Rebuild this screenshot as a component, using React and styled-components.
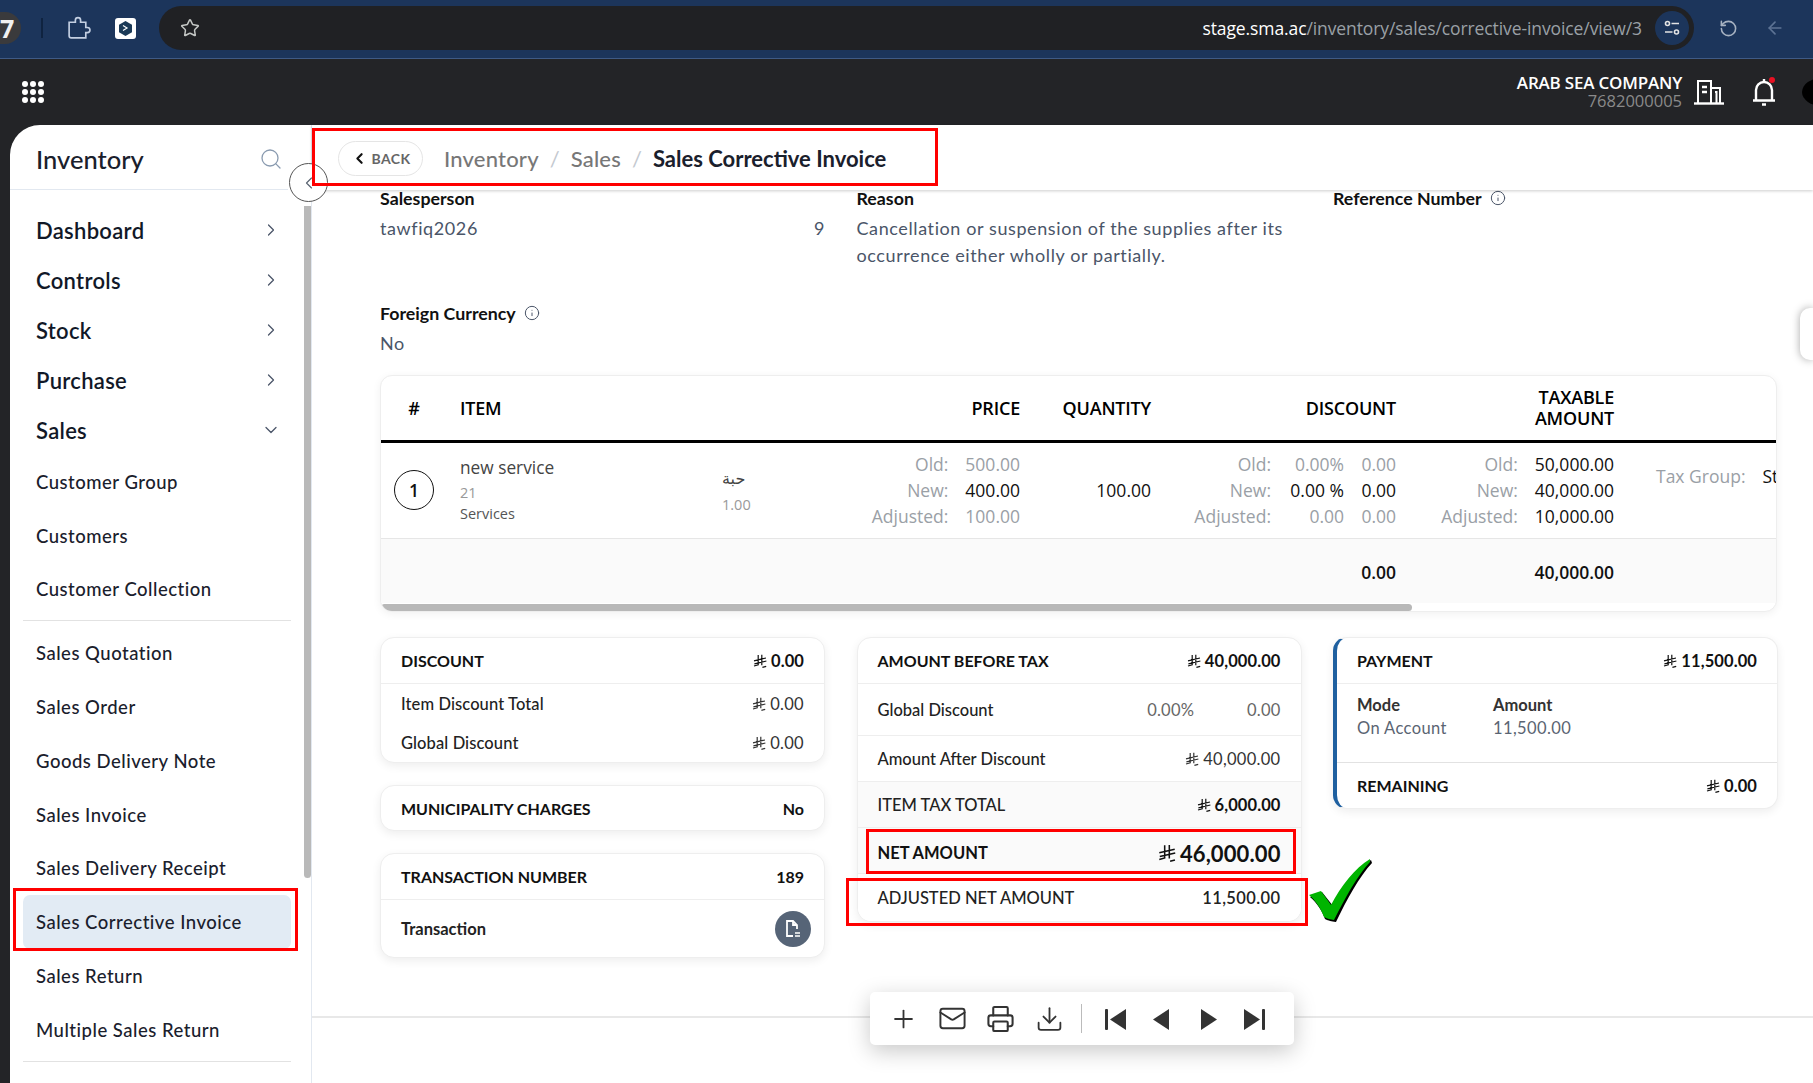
import React from "react";
import styled, { createGlobalStyle } from "styled-components";
import { Star, RotateCcw, ArrowLeft, Search, ChevronRight, ChevronDown, ChevronLeft, Info, Plus, Mail, Printer, Download } from "lucide-react";

const mainFont = `"Lato", "Liberation Sans", sans-serif`;
const tableFont = `"Open Sans", "Noto Sans", sans-serif`;

const GlobalStyle = createGlobalStyle`
  html, body { margin: 0; padding: 0; height: 100%; overflow: hidden; background: #fff; }
  body { font-family: "Lato", "Liberation Sans", sans-serif; color: #1a202c; }
  * { box-sizing: border-box; }
`;

const Riyal = ({ size = 14 }) => (
  <svg width={size} height={size} viewBox="0 0 14 14" fill="none" stroke="currentColor" strokeWidth="1.2">
    <path d="M5.200 1v9.800L1 12M8.800 0.800v10.400M1 6.800l12-2.800M1.400 9.800l12-2.800M9.400 13.400l3.800-1" />
  </svg>
);

const App = () => {
  const mainMenu = ["Dashboard", "Controls", "Stock", "Purchase"];
  const group1 = ["Customer Group", "Customers", "Customer Collection"];
  const group2 = ["Sales Quotation", "Sales Order", "Goods Delivery Note", "Sales Invoice", "Sales Delivery Receipt"];
  const group3 = ["Sales Return", "Multiple Sales Return"];
  return (
    <Page>
      <GlobalStyle />
      <BrowserBar>
        <TabCount>7</TabCount>
        <BarDivider />
        <PuzzleIcon viewBox="0 0 24 24"><path d="M3 6h6V4a2.500 2.500 0 0 1 5 0v2h5v5h1.500a2.500 2.500 0 0 1 0 5H19v5H5a2 2 0 0 1-2-2z" /></PuzzleIcon>
        <ExtLogo>
          <svg width="17" height="17" viewBox="0 0 17 17"><path d="M8.500 1 15 4.700v7.600L8.500 16 2 12.300V4.700z" fill="#1b3a57" /><path d="M6 5.500 10 8 6 10.500" stroke="#fff" strokeWidth="1.200" fill="none" /></svg>
        </ExtLogo>
        <AddressPill>
          <Star size={20} color="#c4c7c5" strokeWidth={1.8} />
          <Url><b>stage.sma.ac</b>/inventory/sales/corrective-invoice/view/3</Url>
          <TuneButton>
            <svg width="18" height="18" viewBox="0 0 18 18" fill="none" stroke="#e3e3e3" strokeWidth="1.6"><circle cx="4.500" cy="4.500" r="2" /><path d="M8.500 4.500H16M2 13h7.500" /><circle cx="13.500" cy="13" r="2" /></svg>
          </TuneButton>
        </AddressPill>
        <NavIcons>
          <RotateCcw size={19} color="#a8b3c2" />
          <ArrowLeft size={20} color="#5d7394" />
        </NavIcons>
      </BrowserBar>

      <AppHeader>
        <DotGrid>{Array.from({ length: 9 }).map((_, i) => <i key={i} />)}</DotGrid>
        <Company>
          <strong>ARAB SEA COMPANY</strong>
          <span>7682000005</span>
        </Company>
        <svg width="30" height="26" viewBox="0 0 30 26" fill="none" stroke="#fff" strokeWidth="2"><path d="M4 24V2h13v22M17 9h9v15" /><path d="M0 24.500h30" strokeWidth="2.400" /><path d="M8 8h5M8 13h5" strokeWidth="2.600" /><path d="M21 13h1.500v11" /></svg>
        <BellWrap>
          <svg width="24" height="30" viewBox="0 0 24 30" fill="none" stroke="#fff" strokeWidth="2.400"><path d="M4 23V13a8 8 0 0 1 16 0v10M1 23.500h22" /><path d="M10 27.500h4M12 2v3" /></svg>
          <RedDot />
        </BellWrap>
        <Avatar />
      </AppHeader>

      <Body>
        <Sidebar>
          <SideHead>
            <SideTitle>Inventory</SideTitle>
            <Search size={24} color="#8a9bb0" strokeWidth={1.3} />
          </SideHead>
          <SideNav>
            {mainMenu.map((m) => (
              <MainItem key={m}>{m}<ChevronRight size={20} color="#4a5568" strokeWidth={1.5} /></MainItem>
            ))}
            <MainItem>Sales<ChevronDown size={20} color="#4a5568" strokeWidth={1.5} /></MainItem>
            {group1.map((m) => <SubItem key={m}>{m}</SubItem>)}
            <SideRule />
            {group2.map((m) => <SubItem key={m}>{m}</SubItem>)}
            <SubItem $active>Sales Corrective Invoice</SubItem>
            {group3.map((m) => <SubItem key={m}>{m}</SubItem>)}
            <SideRule />
          </SideNav>
          <SideScroll />
        </Sidebar>
        <CollapseBtn><ChevronLeft size={20} color="#5a6472" strokeWidth={1.4} /></CollapseBtn>

        <Main>
          <Crumbs>
            <BackBtn><ChevronLeft size={17} color="#111" strokeWidth={3} />BACK</BackBtn>
            <Crumb>Inventory</Crumb><Slash>/</Slash>
            <Crumb>Sales</Crumb><Slash>/</Slash>
            <Crumb $current>Sales Corrective Invoice</Crumb>
          </Crumbs>

          <Content>
            <InfoGrid>
              <InfoCell>
                <Label>Salesperson</Label>
                <ValueRow><Value>tawfiq2026</Value><Value>9</Value></ValueRow>
              </InfoCell>
              <InfoCell>
                <Label>Reason</Label>
                <Value>Cancellation or suspension of the supplies after its occurrence either wholly or partially.</Value>
              </InfoCell>
              <InfoCell>
                <Label>Reference Number <Info size={16} color="#4a5568" strokeWidth={1.5} /></Label>
              </InfoCell>
            </InfoGrid>
            <CurrencyBlock>
              <Label>Foreign Currency <Info size={16} color="#4a5568" strokeWidth={1.5} /></Label>
              <Value>No</Value>
            </CurrencyBlock>

            <TableCard>
              <TableRow $head>
                <NumCol>#</NumCol>
                <ItemCol>ITEM</ItemCol>
                <UnitCol />
                <PriceCol>PRICE</PriceCol>
                <QtyCol>QUANTITY</QtyCol>
                <DiscCol>DISCOUNT</DiscCol>
                <TaxableCol>TAXABLE<br />AMOUNT</TaxableCol>
              </TableRow>
              <TableRow>
                <NumCol><RowNum>1</RowNum></NumCol>
                <ItemCol>
                  <ItemName>new service</ItemName>
                  <ItemCode>21</ItemCode>
                  <ItemCat>Services</ItemCat>
                </ItemCol>
                <UnitCol>
                  <UnitName>حبة</UnitName>
                  <ItemCode>1.00</ItemCode>
                </UnitCol>
                <PriceCol>
                  <Stack>
                    <Muted>Old:</Muted><Muted>500.00</Muted>
                    <Muted>New:</Muted><span>400.00</span>
                    <Muted>Adjusted:</Muted><Muted>100.00</Muted>
                  </Stack>
                </PriceCol>
                <QtyCol>100.00</QtyCol>
                <DiscCol>
                  <Stack $three>
                    <Muted>Old:</Muted><Muted>0.00%</Muted><Muted>0.00</Muted>
                    <Muted>New:</Muted><span>0.00 %</span><span>0.00</span>
                    <Muted>Adjusted:</Muted><Muted>0.00</Muted><Muted>0.00</Muted>
                  </Stack>
                </DiscCol>
                <TaxableCol>
                  <Stack>
                    <Muted>Old:</Muted><span>50,000.00</span>
                    <Muted>New:</Muted><span>40,000.00</span>
                    <Muted>Adjusted:</Muted><span>10,000.00</span>
                  </Stack>
                </TaxableCol>
                <TaxGroup><Muted>Tax Group:</Muted><span>Standard</span></TaxGroup>
              </TableRow>
              <TableRow $foot>
                <NumCol /><ItemCol /><UnitCol /><PriceCol /><QtyCol />
                <DiscCol>0.00</DiscCol>
                <TaxableCol>40,000.00</TaxableCol>
              </TableRow>
              <HScroll><HThumb /></HScroll>
            </TableCard>

            <CardsGrid>
              <CardColumn>
                <Card>
                  <CardHead><span>DISCOUNT</span><Money><Riyal />0.00</Money></CardHead>
                  <PlainRow><span>Item Discount Total</span><Money $plain><Riyal />0.00</Money></PlainRow>
                  <PlainRow><span>Global Discount</span><Money $plain><Riyal />0.00</Money></PlainRow>
                </Card>
                <Card>
                  <CardHead $last><span>MUNICIPALITY CHARGES</span><span>No</span></CardHead>
                </Card>
                <Card>
                  <CardHead><span>TRANSACTION NUMBER</span><span>189</span></CardHead>
                  <TransRow>
                    <span>Transaction</span>
                    <FileBtn>
                      <svg width="18" height="20" viewBox="0 0 18 20" fill="none" stroke="#fff" strokeWidth="1.800"><path d="M9 17H3V2h6l4 4v4M9 2v4h4" /><path d="M11 14h5M11 17h5" strokeWidth="1.400" /></svg>
                    </FileBtn>
                  </TransRow>
                </Card>
              </CardColumn>

              <Card>
                <CardHead><span>AMOUNT BEFORE TAX</span><Money><Riyal />40,000.00</Money></CardHead>
                <SummaryRow $h={52}><span>Global Discount</span><DiscValues><span>0.00%</span><span>0.00</span></DiscValues></SummaryRow>
                <SummaryRow><span>Amount After Discount</span><Money $plain><Riyal />40,000.00</Money></SummaryRow>
                <SummaryRow $shade><span>ITEM TAX TOTAL</span><Money><Riyal />6,000.00</Money></SummaryRow>
                <SummaryRow $shade $net><span>NET AMOUNT</span><Money $big><Riyal size={18} />46,000.00</Money></SummaryRow>
                <SummaryRow $adjusted><span>ADJUSTED NET AMOUNT</span><strong>11,500.00</strong></SummaryRow>
              </Card>

              <Card $accent>
                <CardHead><span>PAYMENT</span><Money><Riyal />11,500.00</Money></CardHead>
                <PayBody>
                  <PayCol><b>Mode</b><span>On Account</span></PayCol>
                  <PayCol><b>Amount</b><span>11,500.00</span></PayCol>
                </PayBody>
                <CardHead $last $top><span>REMAINING</span><Money><Riyal />0.00</Money></CardHead>
              </Card>
            </CardsGrid>
            <FootRule />
          </Content>

          <SideTab />
        </Main>
      </Body>

      <Toolbar>
        <ToolGroup>
          <ToolBtn><Plus size={38} strokeWidth={1.500} /></ToolBtn>
          <ToolBtn><Mail size={33} strokeWidth={1.600} /></ToolBtn>
          <ToolBtn><Printer size={32} strokeWidth={1.700} /></ToolBtn>
          <ToolBtn><Download size={36} strokeWidth={1.500} /></ToolBtn>
        </ToolGroup>
        <ToolDivider />
        <NavGroup>
          <ToolBtn><svg width="24" height="24" viewBox="0 0 24 24" fill="#333"><path d="M22 2v21L6 12.500z" /><rect x="1" y="2" width="3" height="21" rx="1" /></svg></ToolBtn>
          <ToolBtn><svg width="20" height="24" viewBox="0 0 20 24" fill="#333"><path d="M17 2v21L1 12.500z" /></svg></ToolBtn>
          <ToolBtn><svg width="20" height="24" viewBox="0 0 20 24" fill="#333"><path d="M3 2v21l16-10.500z" /></svg></ToolBtn>
          <ToolBtn><svg width="24" height="24" viewBox="0 0 24 24" fill="#333"><path d="M2 2v21l16-10.500z" /><rect x="20" y="2" width="3" height="21" rx="1" /></svg></ToolBtn>
        </NavGroup>
      </Toolbar>

      <RedBox $x={312} $y={128} $w={626} $h={58} />
      <RedBox $x={13} $y={888} $w={285} $h={63} />
      <RedBox $x={866} $y={829} $w={430} $h={45} />
      <RedBox $x={846} $y={878} $w={462} $h={48} />
      <Check viewBox="0 0 64 64">
        <path d="M1 38 13 33 24 47C34 28 48 10 62 1L63 4C50 18 38 40 27 63 22 62 20 62 16 60 13 52 8 44 1 38Z" fill="#000" />
        <path d="M0 36 12 32 22 46C32 27 46 9 61 0L61 3C48 17 36 39 25 61 21 60 19 60 15 58 12 50 7 42 0 36Z" fill="#00b400" />
      </Check>
    </Page>
  );
};

const Page = styled.div`
  position: relative;
  width: 1813px;
  height: 1083px;
  overflow: hidden;
  display: flex;
  flex-direction: column;
  background: #232427;
`;

const BrowserBar = styled.div`
  height: 59px;
  flex: none;
  background: #1c355b;
  border-bottom: 1px solid #3f5a85;
  display: flex;
  align-items: center;
  padding-bottom: 2px;
`;

const TabCount = styled.div`
  width: 21px;
  height: 32px;
  margin-right: 20px;
  border-radius: 0 16px 16px 0;
  background: #3a3a3c;
  color: #f1f1f1;
  font: 700 25px/32px ${tableFont};
`;

const BarDivider = styled.div`
  width: 2px;
  height: 20px;
  background: #0f2340;
  margin-right: 23px;
`;

const PuzzleIcon = styled.svg`
  width: 25px;
  height: 25px;
  fill: none;
  stroke: #c3cfe2;
  stroke-width: 1.6;
  margin-right: 24px;
`;

const ExtLogo = styled.div`
  width: 21px;
  height: 21px;
  background: #fff;
  border-radius: 3px;
  display: flex;
  align-items: center;
  justify-content: center;
  margin-right: 23px;
`;

const AddressPill = styled.div`
  width: 1535px;
  height: 44px;
  flex: none;
  background: #202124;
  border-radius: 22px;
  display: flex;
  align-items: center;
  padding: 0 5px 0 21px;
`;

const Url = styled.div`
  margin-left: auto;
  margin-right: 13px;
  color: #9aa0a6;
  font: 400 17.5px ${tableFont};
  letter-spacing: -0.1px;
  b { font-weight: 400; color: #fff; }
`;

const TuneButton = styled.div`
  width: 34px;
  height: 34px;
  border-radius: 50%;
  background: #1c355b;
  display: flex;
  align-items: center;
  justify-content: center;
`;

const NavIcons = styled.div`
  display: flex;
  gap: 27px;
  margin-left: 25px;
  align-items: center;
`;

const AppHeader = styled.div`
  height: 66px;
  flex: none;
  display: flex;
  align-items: center;
  padding-left: 22px;
`;

const DotGrid = styled.div`
  display: grid;
  grid-template-columns: repeat(3, 6px);
  gap: 2px;
  margin-right: auto;
  i { width: 6px; height: 6px; border-radius: 50%; background: #fff; }
`;

const Company = styled.div`
  display: flex;
  flex-direction: column;
  align-items: flex-end;
  margin-right: 12px;
  color: #fff;
  font-family: ${tableFont};
  strong { font-size: 17px; font-weight: 600; line-height: 18px; letter-spacing: -0.2px; }
  span { font-size: 16.500px; line-height: 18px; color: #8a8a8a; }
`;

const BellWrap = styled.div`
  position: relative;
  display: flex;
  margin-left: 28px;
  margin-right: 26px;
`;

const RedDot = styled.span`
  position: absolute;
  right: 1px;
  top: 0;
  width: 6px;
  height: 6px;
  border-radius: 50%;
  background: #e81123;
`;

const Avatar = styled.div`
  width: 40px;
  height: 28px;
  margin-right: -29px;
  border-radius: 50%;
  background: #000;
`;

const Body = styled.div`
  position: relative;
  flex: 1;
  min-height: 0;
  display: flex;
  padding-left: 10px;
`;

const Sidebar = styled.aside`
  position: relative;
  width: 302px;
  flex: none;
  background: #fff;
  border-top-left-radius: 30px;
  border-right: 1px solid #e2e8f0;
  overflow: hidden;
`;

const SideHead = styled.div`
  height: 65px;
  width: 278px;
  display: flex;
  align-items: center;
  justify-content: space-between;
  padding: 3px 5px 0 26px;
  border-bottom: 1px solid #e2e8f0;
`;

const SideTitle = styled.div`
  font: 500 25.500px ${mainFont};
  color: #1a202c;
`;

const SideNav = styled.nav`
  padding: 15px 0 0 13px;
  width: 280px;
  display: flex;
  flex-direction: column;
`;

const MainItem = styled.div`
  height: 50px;
  display: flex;
  align-items: center;
  justify-content: space-between;
  padding: 0 9px 0 13px;
  font: 600 22px ${mainFont};
  letter-spacing: 0.3px;
  color: #111827;
`;

const SubItem = styled.div`
  height: 53.800px;
  width: 268px;
  display: flex;
  align-items: center;
  padding-left: 13px;
  font: 500 18.500px ${mainFont};
  letter-spacing: 0.5px;
  color: #1a202c;
  border-radius: 7px;
  background: ${(p) => (p.$active ? "#e2ebf4" : "transparent")};
`;

const SideRule = styled.hr`
  width: 268px;
  margin: 4px 0 5px;
  border: 0;
  border-top: 1px solid #e2e2e2;
`;

const SideScroll = styled.div`
  position: absolute;
  right: 0;
  top: 81px;
  width: 7px;
  height: 672px;
  background: #b9b9b9;
  border-radius: 0 0 4px 4px;
`;

const CollapseBtn = styled.div`
  position: absolute;
  left: 289px;
  top: 38px;
  width: 39px;
  height: 39px;
  border-radius: 50%;
  background: #fff;
  border: 1px solid #555;
  display: flex;
  align-items: center;
  justify-content: center;
  z-index: 3;
`;

const Main = styled.main`
  position: relative;
  flex: 1;
  min-width: 0;
  background: #fff;
  display: flex;
  flex-direction: column;
`;

const Crumbs = styled.div`
  height: 65px;
  flex: none;
  display: flex;
  align-items: center;
  padding: 1px 0 0 26px;
  box-shadow: 0 1px 3px rgba(0, 0, 0, 0.2);
  position: relative;
  z-index: 1;
  background: #fff;
`;

const BackBtn = styled.div`
  height: 35px;
  width: 85px;
  margin-right: 21px;
  border: 1px solid #e5e5e5;
  border-radius: 18px;
  display: flex;
  align-items: center;
  justify-content: center;
  gap: 4px;
  font: 700 14px ${mainFont};
  letter-spacing: 0.4px;
  color: #666;
`;

const Crumb = styled.div`
  font: ${(p) => (p.$current ? "700 22px" : "500 22px")} ${mainFont};
  letter-spacing: ${(p) => (p.$current ? "0" : "0.2px")};
  color: ${(p) => (p.$current ? "#1a202c" : "#777")};
`;

const Slash = styled.div`
  margin: 0 11px;
  font: 400 22px ${mainFont};
  color: #c4c9d0;
`;

const Content = styled.div`
  flex: 1;
  min-height: 0;
  padding: 0 36px 0 68px;
`;

const InfoGrid = styled.div`
  display: grid;
  grid-template-columns: 445px 445px 445px;
  column-gap: 31.500px;
  height: 102px;
`;

const InfoCell = styled.div`
  display: flex;
  flex-direction: column;
`;

const Label = styled.div`
  display: flex;
  align-items: center;
  gap: 8px;
  font: 700 17.800px/16px ${mainFont};
  color: #111;
  margin-bottom: 9px;
`;

const ValueRow = styled.div`
  display: flex;
  justify-content: space-between;
`;

const Value = styled.div`
  font: 400 18px/27px ${mainFont};
  letter-spacing: 0.6px;
  color: #4a5568;
`;

const CurrencyBlock = styled.div`
  height: 83px;
  padding-top: 13px;
  ${Label} { margin-bottom: 9px; }
`;

const TableCard = styled.div`
  position: relative;
  height: 237px;
  background: #fff;
  border: 1px solid #eee;
  border-radius: 12px;
  box-shadow: 0 2px 8px rgba(0, 0, 0, 0.06);
  overflow: hidden;
  font-family: ${tableFont};
`;

const NumCol = styled.div`
  width: 66px;
  flex: none;
  display: flex;
  justify-content: center;
`;

const ItemCol = styled.div`
  width: 275px;
  flex: none;
  padding-left: 13px;
`;

const UnitCol = styled.div`
  width: 113px;
  flex: none;
`;

const PriceCol = styled.div`
  width: 185px;
  flex: none;
  text-align: right;
`;

const QtyCol = styled.div`
  width: 131px;
  flex: none;
  text-align: right;
`;

const DiscCol = styled.div`
  width: 245px;
  flex: none;
  text-align: right;
`;

const TaxableCol = styled.div`
  width: 218px;
  flex: none;
  text-align: right;
`;

const TableRow = styled.div`
  display: flex;
  align-items: center;
  white-space: nowrap;
  color: #111;
  font-size: 17.500px;
  ${(p) =>
    p.$head
      ? `height: 67px; border-bottom: 3px solid #000; font-weight: 600; font-size: 18px; line-height: 21px; letter-spacing: -0.2px; color: #000;`
      : p.$foot
      ? `height: 64px; background: #fafafa; font-weight: 600; color: #111; padding-top: 1px;`
      : `height: 96px; border-bottom: 1px solid #e6e6e6; padding-bottom: 1px;`}
`;

const RowNum = styled.div`
  width: 40px;
  height: 40px;
  border: 1px solid #111;
  border-radius: 50%;
  display: flex;
  align-items: center;
  justify-content: center;
  font-weight: 600;
`;

const ItemName = styled.div`
  font-size: 17.300px;
  color: #444;
  line-height: 23px;
`;

const ItemCode = styled.div`
  font-size: 14.500px;
  color: #999;
  line-height: 21px;
  margin-top: 3px;
`;

const ItemCat = styled.div`
  font-size: 14.500px;
  color: #555;
  line-height: 21px;
`;

const UnitName = styled.div`
  font-family: "DejaVu Sans", sans-serif;
  font-size: 16px;
  line-height: 24px;
  color: #444;
  margin-top: 2px;
`;

const Stack = styled.div`
  display: inline-grid;
  grid-template-columns: ${(p) => (p.$three ? "auto 73px 52px" : "auto auto")};
  column-gap: ${(p) => (p.$three ? "0" : "17px")};
  line-height: 26.300px;
  text-align: right;
`;

const Muted = styled.span`
  color: #9aa0a6;
`;

const TaxGroup = styled.div`
  position: absolute;
  left: 1275px;
  top: 0;
  margin-top: 88px;
  display: flex;
  gap: 17px;
`;

const HScroll = styled.div`
  position: absolute;
  left: 0;
  right: 0;
  bottom: 0;
  height: 7px;
`;

const HThumb = styled.div`
  width: 1031px;
  height: 7px;
  border-radius: 4px;
  background: #b8b8b8;
`;

const CardsGrid = styled.div`
  display: grid;
  grid-template-columns: 445px 445px 445px;
  column-gap: 31.500px;
  align-items: start;
  margin-top: 25px;
  height: 379px;
`;

const CardColumn = styled.div`
  display: flex;
  flex-direction: column;
  gap: 22px;
`;

const Card = styled.div`
  background: #fff;
  border: 1px solid #eee;
  border-radius: 14px;
  box-shadow: 0 3px 10px rgba(0, 0, 0, 0.07);
  overflow: hidden;
  font-family: ${mainFont};
  ${(p) => p.$accent && `border-left: 4px solid #1f60a0;`}
`;

const CardHead = styled.div`
  height: ${(p) => (p.$last && !p.$top ? "44px" : "46px")};
  display: flex;
  align-items: center;
  justify-content: space-between;
  padding: 0 20px;
  font-size: 16px;
  font-weight: 700;
  color: #111;
  ${(p) => !p.$last && `border-bottom: 1px solid #eee;`}
  ${(p) => p.$top && `border-top: 1px solid #e2e2e2;`}
`;

const Money = styled.span`
  display: inline-flex;
  align-items: center;
  gap: ${(p) => (p.$big ? "4px" : "4px")};
  font-weight: ${(p) => (p.$plain ? 400 : 700)};
  font-size: ${(p) => (p.$big ? "22px" : "16.500px")};
  letter-spacing: ${(p) => (p.$plain ? "0.3px" : "0.1px")};
  color: ${(p) => (p.$plain ? "#333" : "#111")};
`;

const PlainRow = styled.div`
  height: 39px;
  display: flex;
  align-items: center;
  justify-content: space-between;
  padding: 0 20px;
  font-size: 16.500px;
  font-weight: 500;
  letter-spacing: 0.1px;
  color: #222;
`;

const TransRow = styled.div`
  height: 57px;
  display: flex;
  align-items: center;
  justify-content: space-between;
  padding: 0 13px 0 20px;
  font-size: 16.500px;
  font-weight: 700;
  color: #222;
`;

const FileBtn = styled.div`
  width: 36px;
  height: 36px;
  border-radius: 50%;
  background: #566477;
  display: flex;
  align-items: center;
  justify-content: center;
`;

const SummaryRow = styled.div`
  height: ${(p) => (p.$h ? `${p.$h}px` : p.$adjusted ? "47px" : "46px")};
  display: flex;
  align-items: center;
  justify-content: space-between;
  padding: 0 20px;
  font-size: 16.500px;
  font-weight: 500;
  color: #222;
  border-bottom: ${(p) => (p.$adjusted ? "0" : "1px solid #eee")};
  background: ${(p) => (p.$shade ? "#fafafa" : "#fff")};
  ${(p) => p.$net && `font-weight: 700; color: #111; padding-top: 5px;`}
  ${(p) => p.$adjusted && `strong { font-weight: 600; letter-spacing: 0.4px; }`}
`;

const DiscValues = styled.span`
  display: flex;
  gap: 53px;
  color: #666;
  letter-spacing: 0.2px;
  font-weight: 400;
`;

const PayBody = styled.div`
  height: 78px;
  display: flex;
  padding: 10px 20px;
`;

const PayCol = styled.div`
  width: 136px;
  display: flex;
  flex-direction: column;
  font-size: 16.500px;
  line-height: 23px;
  b { font-weight: 700; color: #333; }
  span { color: #5a6472; letter-spacing: 0.4px; }
`;

const FootRule = styled.div`
  height: 2px;
  margin: 0 -36px 0 -68px;
  background: #e8e8e8;
`;

const SideTab = styled.div`
  position: absolute;
  right: 0;
  top: 183px;
  width: 13px;
  height: 52px;
  background: #fff;
  border-radius: 10px 0 0 10px;
  box-shadow: 0 0 8px rgba(0, 0, 0, 0.35);
`;

const Toolbar = styled.div`
  position: absolute;
  left: 870px;
  top: 992px;
  width: 424px;
  height: 53px;
  background: #fff;
  border-radius: 5px;
  box-shadow: 0 6px 22px rgba(0, 0, 0, 0.22);
  display: flex;
  align-items: center;
  padding: 0 0 0 19px;
  color: #333;
  z-index: 2;
`;

const ToolGroup = styled.div`
  display: flex;
  align-items: center;
  gap: 19.500px;
`;

const NavGroup = styled.div`
  display: flex;
  align-items: center;
  gap: 17px;
`;

const ToolBtn = styled.div`
  display: flex;
  align-items: center;
  justify-content: center;
  width: 29px;
  flex: none;
`;

const ToolDivider = styled.div`
  width: 1px;
  height: 29px;
  background: #bbb;
  margin: 0 20px 0 17px;
`;

const RedBox = styled.div`
  position: absolute;
  left: ${(p) => p.$x}px;
  top: ${(p) => p.$y}px;
  width: ${(p) => p.$w}px;
  height: ${(p) => p.$h}px;
  border: 3px solid #f00;
  z-index: 4;
`;

const Check = styled.svg`
  position: absolute;
  left: 1307px;
  top: 859px;
  width: 68px;
  height: 64px;
  z-index: 4;
`;

export default App;
